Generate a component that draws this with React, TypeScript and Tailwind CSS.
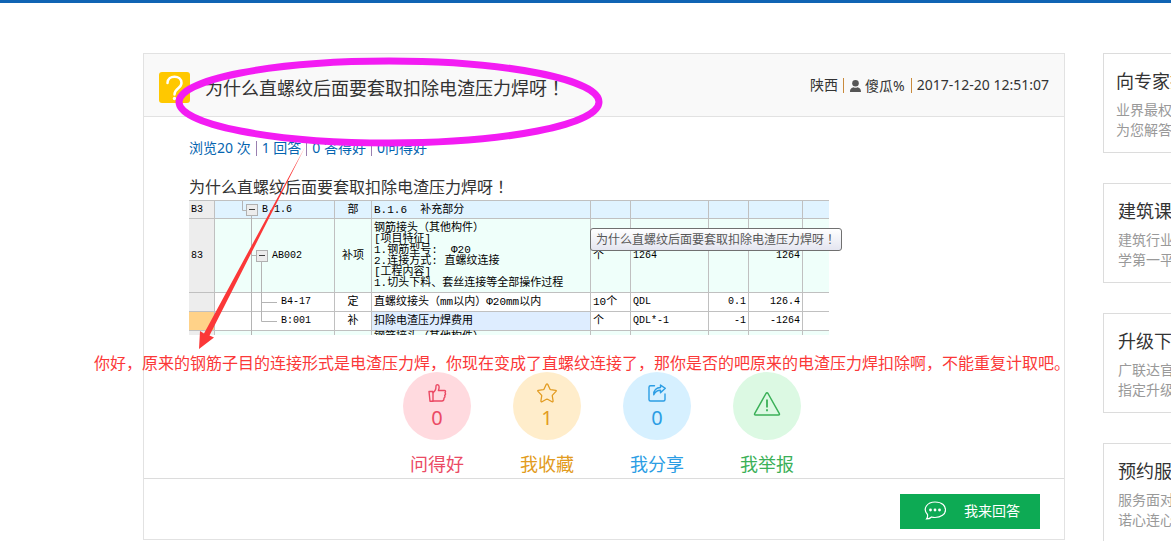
import React from "react";

const services = [
  { title: "向专家提", lines: ["业界最权", "为您解答"], pad: "pl-3" },
  { title: "建筑课", lines: ["建筑行业", "学第一平"], pad: "pl-[14px]" },
  { title: "升级下", lines: ["广联达官", "指定升级"], pad: "pl-[14px]" },
  { title: "预约服", lines: ["服务面对", "诺心连心"], pad: "pl-[14px]" },
];

// the TC face centres the exclamation mark in its box
const Question = () => (
  <>
    为什么直螺纹后面要套取扣除电渣压力焊呀<span className="font-['Noto_Sans_CJK_TC',sans-serif]" lang="zh-TW">！</span>
  </>
);

const ThumbIcon = () => (
  <svg width="20" height="20" viewBox="0 0 20 20" fill="none" stroke="currentColor" strokeWidth="1.4" strokeLinejoin="round" strokeLinecap="round">
    <path d="M2 8.5h4v9.8H3z" />
    <path d="M6 9.6C8.3 8.2 9 6 9 3.2C9 1.3 12 1 12.1 3.7C12.2 5.5 11.6 6.6 11.4 7.5H17.5C18.6 7.5 18.8 8.5 18 9.6C18.8 10.6 18.5 11.7 17.7 12.4C18.2 13.6 17.8 14.6 16.9 15.2C17.2 16.9 16.3 18 14.9 18H6" />
  </svg>
);

const StarIcon = () => (
  <svg width="20" height="20" viewBox="0 0 20 20" fill="none" stroke="currentColor" strokeWidth="1.3" strokeLinejoin="round">
    <path d="M9.3 1.3Q10 .4 10.7 1.3L12.9 6.1Q13.1 6.6 13.7 6.7L18.7 7.3Q19.7 7.6 19 8.4L15.5 12.1Q15.2 12.5 15.3 13L16.1 18Q16.1 19.2 15 18.7L10.6 16.3Q10 16 9.4 16.3L5 18.7Q3.9 19.2 3.9 18L4.7 13Q4.8 12.5 4.5 12.1L1 8.4Q.3 7.6 1.3 7.3L6.3 6.7Q6.9 6.6 7.1 6.1Z" />
  </svg>
);

const ShareIcon = () => (
  <svg width="20" height="20" viewBox="0 0 20 20" fill="none" stroke="currentColor" strokeWidth="1.4" strokeLinejoin="round" strokeLinecap="round">
    <path d="M7.5 2.8H3.5Q2 2.8 2 4.3V16.5Q2 18 3.5 18H16.5Q18 18 18 16.5V11" />
    <path d="M6.8 11.8C6.3 7.5 9.5 4.6 13.5 4.5V2L18.3 5.3L13.5 9.8V7.2C10.3 7.2 8.2 8.7 6.8 11.8Z" />
  </svg>
);

const WarnIcon = () => (
  <svg width="28" height="26" viewBox="0 0 28 26" fill="none" stroke="currentColor" strokeWidth="1.5" strokeLinejoin="round">
    <path d="M13 2.5Q14 .9 15 2.5L26.2 22.3Q27 24 25.3 24H2.7Q1 24 1.8 22.3Z" />
    <path d="M14 8.5V16.5M14 18.3V20.3" strokeWidth="1.8" />
  </svg>
);

const actions = [
  { label: "问得好", count: "0", icon: <ThumbIcon />, circle: "bg-[#ffdadf] pt-1", text: "text-[#eb4a64]" },
  { label: "我收藏", count: "1", icon: <StarIcon />, circle: "bg-[#ffedcb] pt-1", text: "text-[#e29b20]" },
  { label: "我分享", count: "0", icon: <ShareIcon />, circle: "bg-[#d6f0ff] pt-1", text: "text-[#2b9de4]" },
  { label: "我举报", count: "", icon: <WarnIcon />, circle: "bg-[#dcf9e3] pb-1", text: "text-[#3bb058]" },
];

const cell = "border-r border-b border-[#c0c0c0] p-0";

const ToggleBox = () => (
  <span className="flex h-3 w-3 shrink-0 items-center justify-center border border-[#b0b0b0] bg-[#ececec]">
    <span className="h-px w-1.5 bg-[#404040]" />
  </span>
);

const TreeLines = ({ d }: { d: string }) => (
  <svg className="absolute top-0 left-0" width="119" height="74" fill="none" stroke="#b4b4b4">
    <path d={d} />
  </svg>
);

const QuotaTable = () => (
  <div className="h-[135px] w-[640px] overflow-hidden border-t border-[#c0c0c0]">
    <table className="w-[640px] table-fixed border-separate border-spacing-0 font-['Liberation_Mono','Noto_Sans_CJK_SC',monospace] text-[10px] leading-[12px] text-black">
      <colgroup>
        <col className="w-[26px]" />
        <col className="w-[120px]" />
        <col className="w-[37px]" />
        <col className="w-[219px]" />
        <col className="w-[40px]" />
        <col className="w-[78px]" />
        <col className="w-[40px]" />
        <col className="w-[54px]" />
        <col className="w-[26px]" />
      </colgroup>
      <tbody>
        <tr className="h-[18px] bg-[#e0f3ff]">
          <td className={`${cell} bg-[#ededed] pl-0.5`}>B3</td>
          <td className={`${cell} relative`}>
            <TreeLines d="M27.5 0V9.5H31M36.5 14V18" />
            <div className="flex items-center gap-1 pl-[31px]"><ToggleBox />B.1.6</div>
          </td>
          <td className={`${cell} text-center text-[11px]`}>部</td>
          <td className={`${cell} pl-0.5 text-[11px] whitespace-pre`}>B.1.6  补充部分</td>
          <td className={cell} />
          <td className={cell} />
          <td className={cell} />
          <td className={cell} />
          <td className={`${cell} border-r-0`} />
        </tr>
        <tr className="h-[74px] bg-[#effffa]">
          <td className={`${cell} bg-[#ededed] pl-0.5`}>83</td>
          <td className={`${cell} relative`}>
            <TreeLines d="M36.5 0V74M36.5 36.5H41M46.5 42V74" />
            <div className="flex items-center gap-1 pl-[41px]"><ToggleBox />AB002</div>
          </td>
          <td className={`${cell} text-center text-[11px]`}>补项</td>
          <td className={`${cell} pl-0.5 text-[11px] leading-[11px] whitespace-pre`}>
            钢筋接头（其他构件）<br />
            [项目特征]<br />
            1.钢筋型号:  Φ20<br />
            2.连接方式: 直螺纹连接<br />
            [工程内容]<br />
            1.切头下料、套丝连接等全部操作过程
          </td>
          <td className={`${cell} pl-0.5 text-[11px]`}>个</td>
          <td className={`${cell} pl-0.5`}>1264</td>
          <td className={cell} />
          <td className={`${cell} pr-0.5 text-right`}>1264</td>
          <td className={`${cell} border-r-0`} />
        </tr>
        <tr className="h-[19px] bg-white">
          <td className={`${cell} bg-[#ededed]`} />
          <td className={`${cell} relative pl-[66px]`}>
            <TreeLines d="M36.5 0V19M46.5 0V19M46.5 9.5H62" />
            B4-17
          </td>
          <td className={`${cell} text-center text-[11px]`}>定</td>
          <td className={`${cell} pl-0.5 text-[11px]`}>直螺纹接头（mm以内）Φ20mm以内</td>
          <td className={`${cell} pl-0.5 text-[11px]`}>10个</td>
          <td className={`${cell} pl-0.5`}>QDL</td>
          <td className={`${cell} pr-0.5 text-right`}>0.1</td>
          <td className={`${cell} pr-0.5 text-right`}>126.4</td>
          <td className={`${cell} border-r-0`} />
        </tr>
        <tr className="h-[19px] bg-white">
          <td className={`${cell} bg-[#ffd288]`} />
          <td className={`${cell} relative pl-[66px]`}>
            <TreeLines d="M36.5 0V19M46.5 0V9.5H62" />
            B:001
          </td>
          <td className={`${cell} text-center text-[11px]`}>补</td>
          <td className={`${cell} bg-[#deedff] pl-0.5 text-[11px]`}>扣除电渣压力焊费用</td>
          <td className={`${cell} pl-0.5 text-[11px]`}>个</td>
          <td className={`${cell} pl-0.5`}>QDL*-1</td>
          <td className={`${cell} pr-0.5 text-right`}>-1</td>
          <td className={`${cell} pr-0.5 text-right`}>-1264</td>
          <td className={`${cell} border-r-0`} />
        </tr>
        <tr className="h-[74px] bg-[#effffa] align-top">
          <td className={`${cell} bg-[#ededed]`} />
          <td className={`${cell} relative`}><TreeLines d="M36.5 0V74" /></td>
          <td className={cell} />
          <td className={`${cell} pl-0.5 text-[11px]`}>钢筋接头（其他构件）</td>
          <td className={cell} />
          <td className={cell} />
          <td className={cell} />
          <td className={cell} />
          <td className={`${cell} border-r-0`} />
        </tr>
      </tbody>
    </table>
  </div>
);

const App = () => {
  return (
    <div className="overflow-hidden border-t-[3px] border-[#1064b4] bg-white font-['Noto_Sans','Noto_Sans_CJK_SC',sans-serif] text-sm text-[#333]">
      <div className="flex items-start gap-[38px] pt-[50px] pl-[143px]">
        <main className="relative min-w-0 flex-1 border border-[#e2e2e2]">
          <header className="flex h-[63px] items-center justify-between border-b border-[#e2e2e2] bg-[#f9f9f9] px-[15px]">
            <div className="flex items-center gap-[15px] pt-1">
              <svg width="31" height="31" viewBox="0 0 31 31" fill="none">
                <rect width="31" height="31" rx="3" fill="#ffc800" />
                <path d="M8.5 11C8.5 2.5 22.5 2.5 22.5 11C22.5 16.500 15.5 16 15.5 22.5" stroke="#fff" strokeWidth="2.5" strokeLinecap="round" />
                <circle cx="15.5" cy="26.5" r="1.7" fill="#fff" />
              </svg>
              <h1 className="text-lg whitespace-nowrap"><Question /></h1>
            </div>
            <div className="flex items-center gap-[5px] whitespace-nowrap">
              <span>陕西</span>
              <span className="h-[15px] w-px bg-[#c98a3c]" />
              <a href="#user" className="flex items-center gap-1 px-px pt-0.5">
                <svg width="11" height="12" viewBox="0 0 11 12" fill="#555">
                  <circle cx="5.5" cy="3.3" r="3.3" />
                  <path d="M0 12C0 8.5 2 7.5 3.5 7.2Q5.5 8.5 7.5 7.2C9 7.5 11 8.5 11 12Z" />
                </svg>
                傻瓜%
              </a>
              <span className="h-[15px] w-px bg-[#c98a3c]" />
              <time>2017-12-20 12:51:07</time>
            </div>
          </header>

          <section className="pt-[19px] pl-[45px]">
            <div className="flex items-center gap-[5px] leading-6 text-[#0565b0]">
              <span>浏览20 次</span>
              <span className="h-[15px] w-px bg-[#9a7fb0]" />
              <span>1 回答</span>
              <span className="h-[15px] w-px bg-[#9a7fb0]" />
              <span>0 答得好</span>
              <span className="h-[15px] w-px bg-[#9a7fb0]" />
              <span>0问得好</span>
            </div>
            <p className="pt-3.5 pb-px text-base leading-6"><Question /></p>
            <QuotaTable />
          </section>

          <div className="flex justify-center gap-[42px] pt-[37px] pr-1">
            {actions.map((item) => (
              <button key={item.label} type="button" className={`flex w-[68px] flex-col items-center ${item.text}`}>
                <span className={`flex h-[68px] w-[68px] flex-col items-center justify-center rounded-full ${item.circle}`}>
                  {item.icon}
                  {item.count && <span className="text-xl leading-[30px]">{item.count}</span>}
                </span>
                <span className="pt-[10px] text-lg leading-7">{item.label}</span>
              </button>
            ))}
          </div>

          <footer className="flex h-[61px] items-center justify-end border-t border-[#dcdcdc] pt-1 pr-6">
            <button type="button" className="flex h-[35px] w-[140px] items-center gap-[18px] bg-[#0daa54] pl-6 text-white">
              <svg width="22" height="20" viewBox="0 0 22 20" fill="none" stroke="#fff">
                <path d="M3.5 13.5C-2 7.5 3.5 1 11 1S21.5 5 21.5 9S17 16.5 11 16.5Q9 16.5 7.5 16Q5.5 18 2.5 18Q4 16 3.5 13.5Z" strokeWidth="1.2" />
                <g fill="#fff" stroke="none">
                  <circle cx="6.5" cy="9" r="1.4" />
                  <circle cx="11" cy="9" r="1.4" />
                  <circle cx="15.5" cy="9" r="1.4" />
                </g>
              </svg>
              我来回答
            </button>
          </footer>

          {/* hover title of the question picture */}
          <div role="tooltip" className="absolute top-[174px] left-[446px] rounded-[3px] border border-[#707070] bg-gradient-to-b from-white to-[#e4e5f0] px-[5px] text-xs leading-5 whitespace-nowrap text-[#575757]">
            <Question />
          </div>

          {/* hand-drawn notes */}
          <svg className="pointer-events-none absolute top-0 left-0" width="470" height="300" fill="none">
            <ellipse cx="245" cy="48" rx="210" ry="41" stroke="#f31cf3" strokeWidth="7" />
            <path d="M161 93L65.5 281.5L70 283.5L55 295L56 277L60 279.5Z" fill="#fb3838" />
          </svg>
          <p className="absolute top-[298px] -left-[50px] font-['Liberation_Sans','Noto_Sans_CJK_SC',sans-serif] text-base leading-6 whitespace-nowrap text-[#fb3838]">
            你好，原来的钢筋子目的连接形式是电渣压力焊，你现在变成了直螺纹连接了，那你是否的吧原来的电渣压力焊扣除啊，不能重复计取吧。
          </p>
        </main>

        <aside className="flex w-[68px] shrink-0 flex-col gap-[30px]">
          {services.map((item) => (
            <section key={item.title} className={`h-[100px] border border-r-0 border-[#dcdcdc] pt-[13px] whitespace-nowrap ${item.pad}`}>
              <h2 className="text-lg leading-7">{item.title}</h2>
              <p className="pt-[5px] leading-5 text-[#999]">
                {item.lines[0]}
                <br />
                {item.lines[1]}
              </p>
            </section>
          ))}
        </aside>
      </div>
    </div>
  );
};

export default App;
